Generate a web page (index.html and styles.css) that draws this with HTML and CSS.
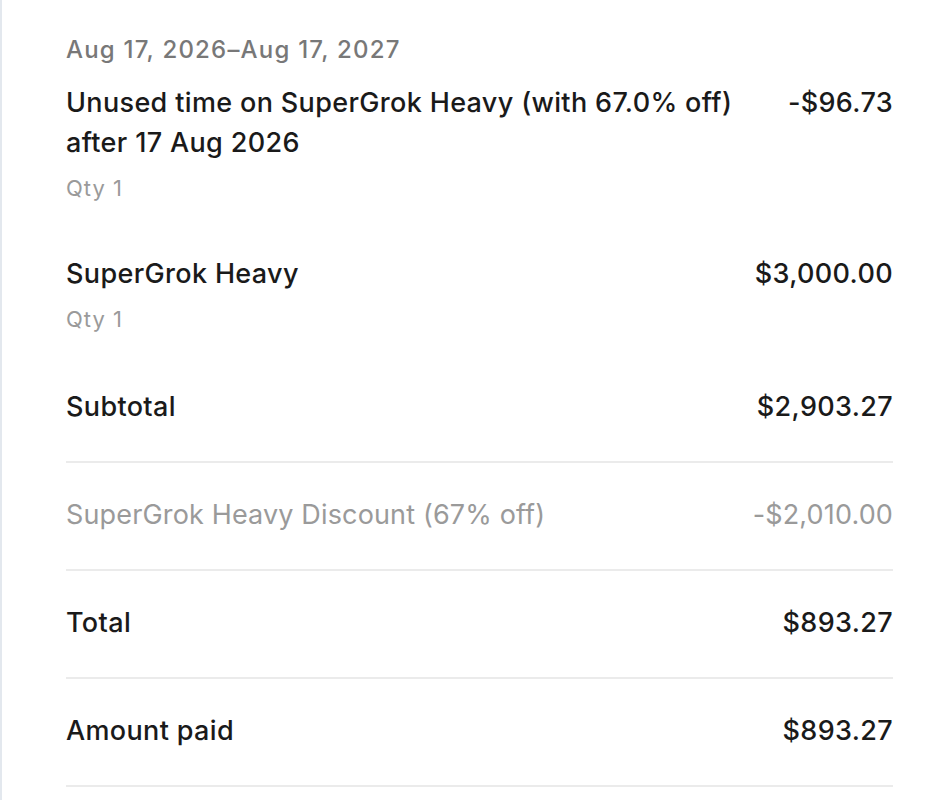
FILE: index.html
```html
<!DOCTYPE html>
<html lang="en">
<head>
    <meta charset="UTF-8">
    <meta name="viewport" content="width=device-width, initial-scale=1.0">
    <title>Invoice</title>
    <link rel="stylesheet" href="styles.css">
</head>
<body>
    <div class="invoice">
        <div class="period">Aug 17, 2026–Aug 17, 2027</div>

        <!-- Line items -->
        <div class="item">
            <div class="item-row">
                <div class="item-name">Unused time on SuperGrok Heavy (with 67.0% off) after 17 Aug 2026</div>
                <div class="item-amount">-$96.73</div>
            </div>
            <div class="qty">Qty 1</div>
        </div>
        <div class="item">
            <div class="item-row">
                <div class="item-name">SuperGrok Heavy</div>
                <div class="item-amount">$3,000.00</div>
            </div>
            <div class="qty">Qty 1</div>
        </div>

        <!-- Totals -->
        <div class="summary">
            <div class="summary-row">
                <span>Subtotal</span>
                <span>$2,903.27</span>
            </div>
            <div class="summary-row muted">
                <span>SuperGrok Heavy Discount (67% off)</span>
                <span>-$2,010.00</span>
            </div>
            <div class="summary-row">
                <span>Total</span>
                <span>$893.27</span>
            </div>
            <div class="summary-row">
                <span>Amount paid</span>
                <span>$893.27</span>
            </div>
        </div>
    </div>
</body>
</html>
```

FILE: styles.css
```css
body {
    margin: 0;
    background: #fff;
    font-family: Inter, "Noto Sans", sans-serif;
    color: #1a1a1a;
}

.invoice {
    border-left: 2px solid #e3e8ee;
    min-height: 100vh;
    padding: 34px 51px 0 64px;
    box-sizing: border-box;
}

.period {
    font-size: 24px;
    line-height: 32px;
    font-weight: 500;
    letter-spacing: 1.2px;
    color: #787878;
    margin-bottom: 17px;
}

.item + .item {
    margin-top: 50px;
}

.item-row {
    display: flex;
    justify-content: space-between;
    gap: 40px;
}

.item-name,
.item-amount,
.summary-row {
    font-size: 27px;
    line-height: 40px;
    font-weight: 500;
    letter-spacing: 0.35px;
}

.item-name {
    max-width: 680px;
}

.item-amount {
    white-space: nowrap;
}

.qty {
    font-size: 22px;
    line-height: 32px;
    letter-spacing: 1px;
    color: #9a9a9a;
    margin-top: 9px;
}

.summary {
    margin-top: 20px;
}

.summary-row {
    display: flex;
    justify-content: space-between;
    padding: 32px 0 34px;
    border-bottom: 2px solid #ebebeb;
}

.summary-row.muted {
    color: #9a9a9a;
    font-weight: 400;
    letter-spacing: 0.15px;
}
```
